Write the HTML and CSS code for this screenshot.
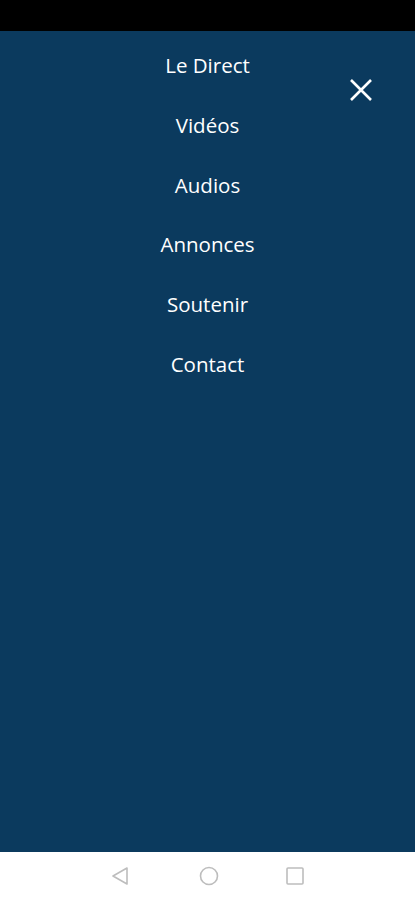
FILE: index.html
```html
<!DOCTYPE html>
<html lang="fr">
<head>
  <meta charset="UTF-8" />
  <meta name="viewport" content="width=device-width, initial-scale=1.0" />
  <title>Menu</title>
  <link rel="stylesheet" href="styles.css">
</head>
<body>
  <div class="status-bar"></div>

  <div class="menu">
    <button class="close-btn" aria-label="Fermer">
      <svg width="24" height="24" viewBox="0 0 24 24">
        <path d="M2 2 L22 22 M22 2 L2 22" stroke="#fff" stroke-width="2.6" fill="none" />
      </svg>
    </button>
    <nav class="menu-links">
      <a href="#">Le Direct</a>
      <a href="#">Vidéos</a>
      <a href="#">Audios</a>
      <a href="#">Annonces</a>
      <a href="#">Soutenir</a>
      <a href="#">Contact</a>
    </nav>
  </div>

  <div class="nav-bar">
    <svg width="18" height="20" viewBox="0 0 18 20">
      <path d="M16 2 L2 10 L16 18 Z" stroke="#bdbdbd" stroke-width="1.6" fill="none" stroke-linejoin="round" />
    </svg>
    <svg width="20" height="20" viewBox="0 0 20 20">
      <circle cx="10" cy="10" r="8.5" stroke="#bdbdbd" stroke-width="1.6" fill="none" />
    </svg>
    <svg class="recent" width="18" height="18" viewBox="0 0 18 18">
      <rect x="1" y="1" width="16" height="16" rx="1" stroke="#bdbdbd" stroke-width="1.6" fill="none" />
    </svg>
  </div>
</body>
</html>
```

FILE: styles.css
```css
body {
  margin: 0;
  padding: 0;
  font-family: "Open Sans", sans-serif;
  background: #0b3a5e;
  height: 900px;
  display: flex;
  flex-direction: column;
  overflow: hidden;
}

.status-bar {
  height: 31px;
  background: #000;
}

.menu {
  flex: 1;
  position: relative;
  background: #0b3a5e;
}

.menu-links {
  display: flex;
  flex-direction: column;
  align-items: center;
  padding-top: 19px;
}

.menu-links a {
  color: #fff;
  text-decoration: none;
  font-size: 20.5px;
  line-height: 30px;
  margin-bottom: 29.8px;
}

.close-btn {
  position: absolute;
  top: 47px;
  right: 42px;
  background: none;
  border: none;
  padding: 0;
  width: 24px;
  height: 24px;
  cursor: pointer;
}

.nav-bar {
  height: 48px;
  background: #fff;
  display: flex;
  align-items: center;
  justify-content: center;
  gap: 70px;
}

.nav-bar .recent {
  margin-left: -3px;
}
```
